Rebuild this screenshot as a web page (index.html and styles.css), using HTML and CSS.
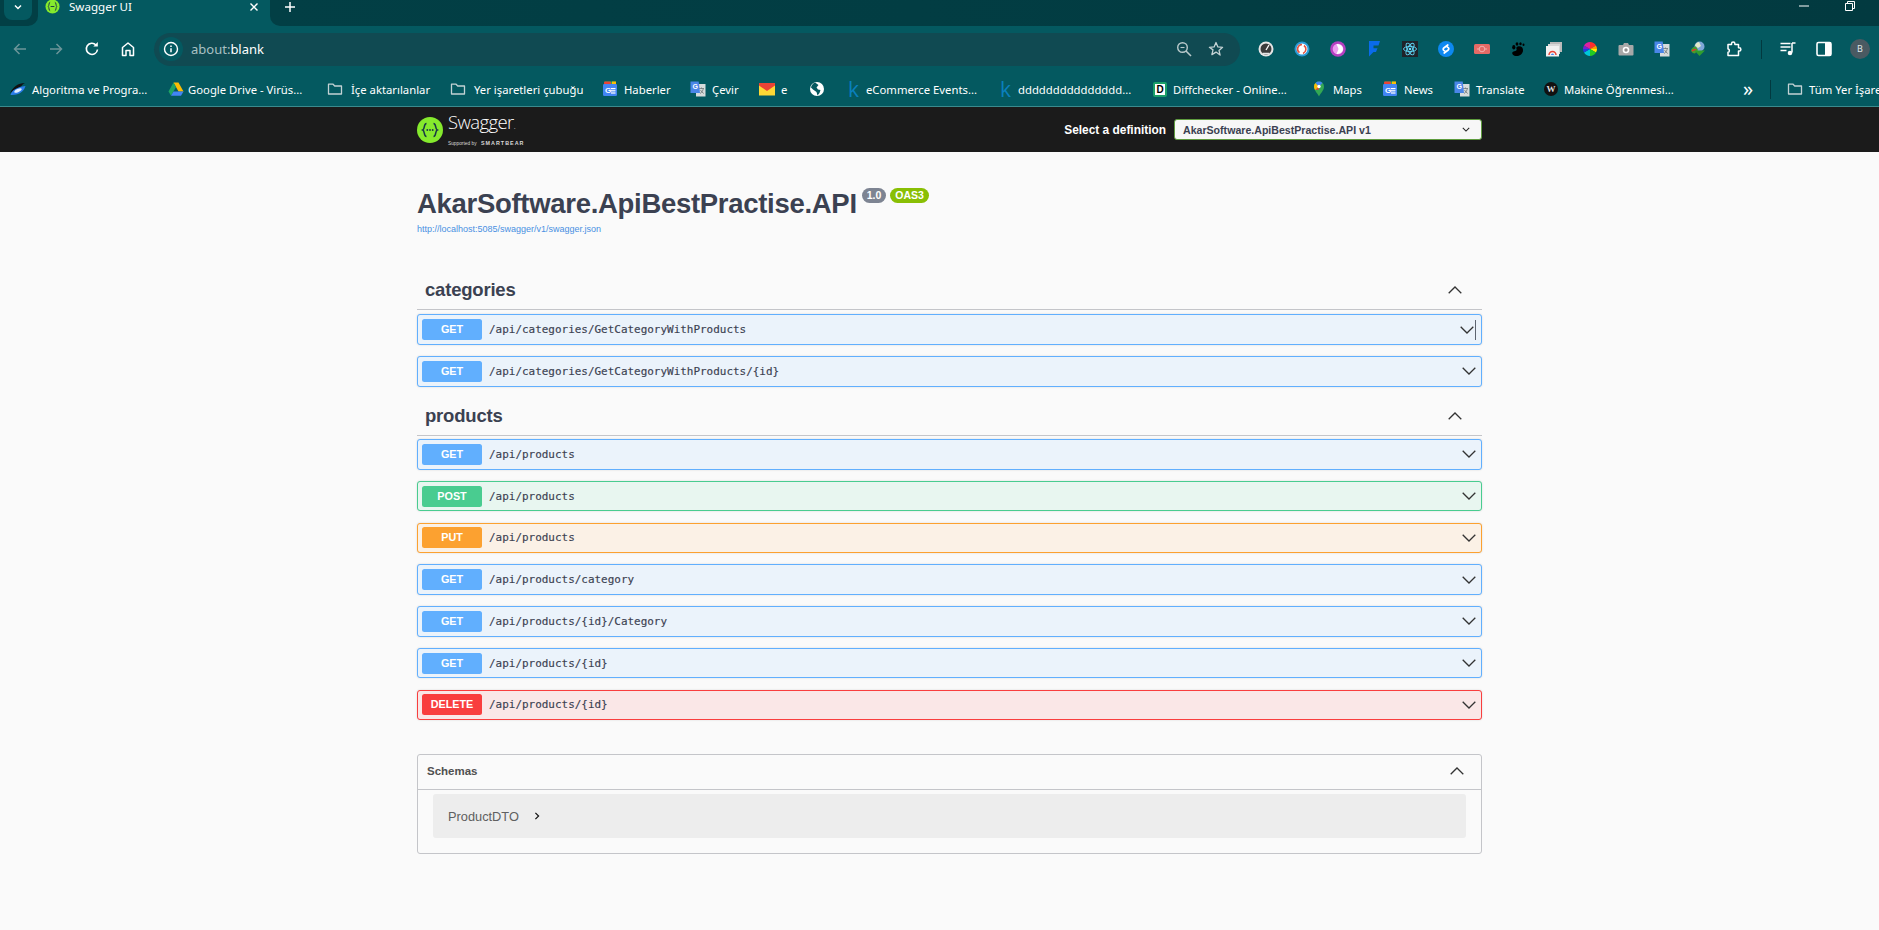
FILE: index.html
```html
<!DOCTYPE html>
<html lang="tr">
<head>
<meta charset="utf-8">
<title>Swagger UI</title>
<link rel="stylesheet" href="styles.css">
</head>
<body>
<svg class="defs" width="0" height="0" aria-hidden="true">
  <defs>
    <symbol id="folder" viewBox="0 0 16 16"><path d="M1.500 13V3.200h4.600l1.600 1.800h6.800V13z" fill="none" stroke="#c3d2d4" stroke-width="1.300" stroke-linejoin="round"/></symbol>
    <symbol id="news" viewBox="0 0 16 16"><rect x="2" y="0.500" width="12" height="4" rx="1" fill="#34a853"/><rect x="2" y="0.500" width="7" height="3" rx="1" fill="#ea4335"/><rect x="10" y="0.500" width="4" height="3" fill="#fbbc04"/><rect x="1" y="3" width="14" height="12" rx="1.200" fill="#4285f4"/><text x="3" y="12" class="newsg">G</text><rect x="9" y="7" width="4.500" height="1.200" fill="#fff"/><rect x="9" y="9.200" width="4.500" height="1.200" fill="#fff"/><rect x="9" y="11.400" width="4.500" height="1.200" fill="#fff"/></symbol>
    <symbol id="translate" viewBox="0 0 16 16"><rect x="6" y="3" width="9.500" height="12.500" fill="#d7dcdc"/><path d="M9 7.500h5M11.500 6.500v1M10 12.500c2-1 3-3 3.300-5M10.500 9c.8 1.500 1.800 2.700 3.300 3.500" stroke="#6e7777" stroke-width=".8" fill="none"/><path d="M.5 .5h8.200l1.300 11.500H.5z" fill="#4a86e8"/><text x="2.400" y="8" class="transg">G</text></symbol>
    <symbol id="chev-down" viewBox="0 0 14 8"><path d="M.7.8 7 7 13.300.8" fill="none" stroke="#333" stroke-width="1.300"/></symbol>
    <symbol id="chev-up" viewBox="0 0 14 8"><path d="M.7 7.200 7 1l6.300 6.200" fill="none" stroke="#333" stroke-width="1.300"/></symbol>
  </defs>
</svg>

<div class="chrome">
  <div class="tabstrip">
    <div class="strip-left">
      <div class="tabs-btn"><svg class="i10" viewBox="0 0 10 10"><path d="M2 3.500 5 6.500 8 3.500" fill="none" stroke="#fff" stroke-width="1.500"/></svg></div>
    </div>
    <div class="tab">
      <svg class="tab-fav" viewBox="0 0 16 16"><circle cx="8" cy="8" r="7.500" fill="#85ea2d"/><path d="M5.500 3.500C4 3.500 4.500 7 3.500 8c1 1 .5 4.500 2 4.500M10.500 3.500c1.500 0 1 3.500 2 4.500-1 1-.5 4.500-2 4.500M6 8h4" fill="none" stroke="#173647" stroke-width="1"/></svg>
      <span class="tab-title">Swagger UI</span>
      <svg class="tab-close" viewBox="0 0 10 10"><path d="M1.500 1.500l7 7M8.500 1.500l-7 7" stroke="#fff" stroke-width="1.400"/></svg>
    </div>
    <div class="strip-right">
      <svg class="new-tab" viewBox="0 0 12 12"><path d="M6 1v10M1 6h10" stroke="#fff" stroke-width="1.500"/></svg>
      <div class="win-controls">
        <svg class="win-btn" viewBox="0 0 10 10"><path d="M0 5h10" stroke="#fff" stroke-width="1"/></svg>
        <svg class="win-btn" viewBox="0 0 10 10"><path d="M.5 2.500h7v7h-7zM2.500 2.500V.5h7v7h-2" fill="none" stroke="#fff" stroke-width="1"/></svg>
      </div>
    </div>
  </div>

  <div class="toolbar">
    <div class="nav">
      <div class="slot"><svg class="i16" viewBox="0 0 16 16"><path d="M14 8H2.500M7.500 3l-5 5 5 5" fill="none" stroke="#6c9599" stroke-width="1.500"/></svg></div>
      <div class="slot"><svg class="i16" viewBox="0 0 16 16"><path d="M2 8h11.500M8.500 3l5 5-5 5" fill="none" stroke="#6c9599" stroke-width="1.500"/></svg></div>
      <div class="slot"><svg class="i16" viewBox="0 0 16 16"><path d="M13.500 8.500A5.600 5.600 0 1 1 12 4" fill="none" stroke="#fff" stroke-width="1.600"/><path d="M13.800 1v4.500H9.300z" fill="#fff"/></svg></div>
      <div class="slot"><svg class="i16" viewBox="0 0 16 16"><path d="M2.500 14.500V6.500L8 2l5.500 4.500v8H10V9.500H6v5z" fill="none" stroke="#fff" stroke-width="1.500" stroke-linejoin="round"/></svg></div>
    </div>
    <div class="omnibox">
      <div class="info-chip"><svg class="i16" viewBox="0 0 16 16"><circle cx="8" cy="8" r="6.500" fill="none" stroke="#fff" stroke-width="1.400"/><path d="M8 7.200v4M8 4.600v1.400" stroke="#fff" stroke-width="1.500"/></svg></div>
      <div class="url"><span class="url-dim">about:</span>blank</div>
      <div class="omni-actions">
        <svg class="i16" viewBox="0 0 16 16"><circle cx="6.500" cy="6.500" r="4.800" fill="none" stroke="#b9c9cb" stroke-width="1.400"/><path d="M10 10l5 5" stroke="#b9c9cb" stroke-width="1.600"/><path d="M4.500 6.500h4" stroke="#b9c9cb" stroke-width="1.100"/></svg>
        <svg class="i16" viewBox="0 0 16 16"><path d="M8 1.500l1.900 4.400 4.700.4-3.600 3.100 1.100 4.700L8 11.100l-4.100 2.500L5 8.900 1.400 6.300l4.700-.4z" fill="none" stroke="#c4d3d5" stroke-width="1.300" stroke-linejoin="round"/></svg>
      </div>
    </div>
    <div class="extensions">
      <div class="slot"><svg class="i16" viewBox="0 0 16 16"><circle cx="8" cy="8" r="7.500" fill="#e6e6e6"/><circle cx="8" cy="8" r="5.500" fill="#3b3b3b"/><path d="M8 9l3-5" stroke="#fff" stroke-width="1.300"/><path d="M4.500 12.500h7" stroke="#e6e6e6" stroke-width="1.500"/></svg></div>
      <div class="slot"><svg class="i16" viewBox="0 0 16 16"><circle cx="8" cy="8" r="7.500" fill="#2a9ad6"/><circle cx="8" cy="8" r="5.500" fill="#fff"/><path d="M8 3.500A4.500 4.500 0 0 0 5.500 11.700" fill="none" stroke="#e2533f" stroke-width="1.600"/><path d="M10 4.500A4.500 4.500 0 0 1 9 12.400" fill="none" stroke="#e2533f" stroke-width="1.600"/></svg></div>
      <div class="slot"><svg class="i16" viewBox="0 0 16 16"><circle cx="8" cy="8" r="7.800" fill="#b540c0"/><circle cx="8" cy="8" r="5.300" fill="#ee9bf0"/><path d="M6.500 3c4 0 6.500 2.200 6.500 5s-2.500 5-6.500 5l2-5z" fill="#fff"/></svg></div>
      <div class="slot"><svg class="i16" viewBox="0 0 16 16"><path d="M3 0h11l-1.500 4.500H7.500v2.800h4l-1.500 3.700H7.500L3 15.500z" fill="#0a6bea"/></svg></div>
      <div class="slot"><svg class="i16" viewBox="0 0 16 16"><rect width="16" height="16" fill="#20232a"/><g fill="none" stroke="#61dafb" stroke-width=".9"><ellipse cx="8" cy="8" rx="6.500" ry="2.600"/><ellipse cx="8" cy="8" rx="6.500" ry="2.600" transform="rotate(60 8 8)"/><ellipse cx="8" cy="8" rx="6.500" ry="2.600" transform="rotate(120 8 8)"/></g><circle cx="8" cy="8" r="1.300" fill="#61dafb"/></svg></div>
      <div class="slot"><svg class="i16" viewBox="0 0 16 16"><circle cx="8" cy="8" r="8" fill="#0d88f0"/><path d="M9.800 4 5.800 7a1.500 1.500 0 0 0 0 2.400l1.700 1.200M6.200 12l4-3a1.500 1.500 0 0 0 0-2.400L8.500 5.400" fill="none" stroke="#fff" stroke-width="1.700" stroke-linecap="round"/></svg></div>
      <div class="slot"><svg class="i16" viewBox="0 0 16 16"><rect y="3" width="16" height="10" rx="1.500" fill="#e66a66"/><circle cx="8" cy="8" r="2.800" fill="none" stroke="#f3b7b5" stroke-width=".9"/><path d="M3 8h2M11 8h2" stroke="#f3b7b5" stroke-width=".9"/></svg></div>
      <div class="slot"><svg class="i16" viewBox="0 0 16 16"><path d="M7.500 5.500c3.500-1 6 1 5.500 4.500-.6 3.500-4 5.500-7.500 5-3-.5-4.200-3-2.500-4.200 1.500-1 3.500-.5 3.700-2C6.300 7.300 6 6 7.500 5.500z" fill="#000"/><ellipse cx="3.800" cy="6.200" rx="1.600" ry="2.200" fill="#000"/><ellipse cx="7" cy="3" rx="1.400" ry="1.800" fill="#000"/><ellipse cx="10.500" cy="2.800" rx="1.200" ry="1.500" fill="#000"/><ellipse cx="13.500" cy="3.800" rx="1" ry="1.300" fill="#000"/></svg></div>
      <div class="slot"><svg class="i16" viewBox="0 0 16 16"><rect x="4" y="1" width="12" height="10" fill="#bbb"/><rect x="2" y="3" width="12" height="10" fill="#d8d8d8"/><rect y="5" width="13" height="10.500" fill="#f1f1f1"/><path d="M3 14a3.500 3.500 0 0 1 7 0" fill="none" stroke="#ea4335" stroke-width="1.500"/><path d="M5 14a1.500 1.500 0 0 1 3 0" fill="#4285f4"/></svg></div>
      <div class="slot"><svg class="i16" viewBox="0 0 16 16"><path d="M8 8V1A7 7 0 0 1 14 4.500z" fill="#ff2d2d"/><path d="M8 8 14 4.500A7 7 0 0 1 15 8z" fill="#ff9a00"/><path d="M8 8h7a7 7 0 0 1-1 3.500z" fill="#ffee00"/><path d="M8 8l6 3.500A7 7 0 0 1 8 15z" fill="#22cc22"/><path d="M8 8v7a7 7 0 0 1-6-3.500z" fill="#00c8d8"/><path d="M8 8 2 11.500A7 7 0 0 1 1 8z" fill="#2040e0"/><path d="M8 8H1a7 7 0 0 1 1-3.500z" fill="#7a20d0"/><path d="M8 8 2 4.500A7 7 0 0 1 8 1z" fill="#e020a0"/></svg></div>
      <div class="slot"><svg class="i16" viewBox="0 0 16 16"><path d="M1.500 4H5l1-2h4l1 2h3.500A1 1 0 0 1 15.500 5v8.500a1 1 0 0 1-1 1h-13a1 1 0 0 1-1-1V5a1 1 0 0 1 1-1z" fill="#a8a8a8"/><circle cx="8" cy="9" r="3.300" fill="#fff"/><circle cx="8" cy="9" r="1.700" fill="#8e8e8e"/></svg></div>
      <div class="slot"><svg class="i16"><use href="#translate"/></svg></div>
      <div class="slot"><svg class="i16" viewBox="0 0 16 16"><circle cx="9.500" cy="5.500" r="5" fill="#7ea7d8"/><path d="M5 5a5 5 0 0 1 4-4l2 4-3 2z" fill="#e2e9c9"/><path d="M1 9c1.500-3 4-4 5-3.500L8 9l-3 3.500C3 12.500 1 11 1 9z" fill="#4c9a2a"/><path d="M2 10c2-1.500 3-1.500 4-1" stroke="#e2382b" stroke-width="1.500" fill="none"/><path d="M4.500 9.500H15L9.500 15z" fill="#2f9e2f"/></svg></div>
      <div class="slot"><svg class="i16" viewBox="0 0 16 16"><path d="M2 3.500h3.500V2.800a1.700 1.700 0 0 1 3.400 0v.7H12.500v3.200h.7a1.700 1.700 0 0 1 0 3.400h-.7v4.400H2v-3.200c1.800 0 1.800-3.300 0-3.300z" fill="none" stroke="#fff" stroke-width="1.500" stroke-linejoin="round"/></svg></div>
      <div class="sep-slot"><span class="toolbar-sep"></span></div>
      <div class="slot"><svg class="i16" viewBox="0 0 16 16"><path d="M.5 2.500h10M.5 6h10M.5 9.500h6" stroke="#fff" stroke-width="1.500"/><path d="M12 2v9.500" stroke="#fff" stroke-width="1.500"/><path d="M12 2h3.500" stroke="#fff" stroke-width="1.500"/><circle cx="10" cy="12" r="2.300" fill="#fff"/></svg></div>
      <div class="slot"><svg class="i16" viewBox="0 0 16 16"><rect x="1" y="1.500" width="14" height="13" rx="1.500" fill="none" stroke="#fff" stroke-width="1.600"/><rect x="9" y="1.500" width="6" height="13" fill="#fff"/></svg></div>
      <div class="slot"><span class="avatar">B</span></div>
    </div>
  </div>

  <div class="bookmarks">
    <div class="bm"><svg class="i16" viewBox="0 0 16 16"><path d="M0 12C3 6 8 2 15 2c-2 1-3 2-3.500 3L3 10z" fill="#111"/><path d="M.5 14C2 9 6 6.500 15.500 5c-1.500 5-6 9.500-15 9z" fill="#2b7de9"/><ellipse cx="8" cy="9.500" rx="4" ry="1.600" fill="#dfeeff" transform="rotate(-25 8 9.500)"/></svg><span>Algoritma ve Progra...</span></div>
    <div class="bm tight"><svg class="i16" viewBox="0 0 16 16"><path d="M5.500 1.500h5L15.500 10.500h-5z" fill="#fbbc04"/><path d="M5.500 1.500 .5 10.500l2.500 4.300L8 6z" fill="#1fa463"/><path d="M3 14.800h10l2.500-4.300H5.500z" fill="#4285f4"/></svg><span>Google Drive - Virüs...</span></div>
    <div class="bm loose"><svg class="i16"><use href="#folder"/></svg><span>İçe aktarılanlar</span></div>
    <div class="bm loose"><svg class="i16"><use href="#folder"/></svg><span>Yer işaretleri çubuğu</span></div>
    <div class="bm"><svg class="i16"><use href="#news"/></svg><span>Haberler</span></div>
    <div class="bm"><svg class="i16"><use href="#translate"/></svg><span>Çevir</span></div>
    <div class="bm"><svg class="i16" viewBox="0 0 16 16"><rect y="2" width="16" height="12.500" fill="#fdd835"/><path d="M0 2h16v2.500L8 10 0 4.500z" fill="#ea4335"/></svg><span>e</span></div>
    <div class="bm"><svg class="i16" viewBox="0 0 16 16"><circle cx="8" cy="8" r="7" fill="#fff"/><path d="M6 1.500 9.500 4 7.500 6.500 9 8.500l2.500.5L10.500 12 8.500 14.500 7.500 11 4 8.500 2 6.500C2.500 4 4 2.500 6 1.500z" fill="#045960"/></svg></div>
    <div class="bm"><span class="k-mark">k</span><span>eCommerce Events...</span></div>
    <div class="bm"><span class="k-mark">k</span><span>ddddddddddddddd...</span></div>
    <div class="bm"><span class="d-mark">D</span><span>Diffchecker - Online...</span></div>
    <div class="bm"><svg class="i16" viewBox="0 0 16 16"><path d="M8 15.500C6 11.500 3 9.500 3 5.500a5 5 0 0 1 10 0c0 4-3 6-5 10z" fill="#34a853"/><path d="M3 5.500a5 5 0 0 1 1.500-3.500L8 5.500 4.300 9C3.500 7.800 3 6.800 3 5.500z" fill="#fbbc04"/><path d="M4.500 2A5 5 0 0 1 11.500 2L8 5.500z" fill="#4285f4"/><path d="M4.300 9 8 5.500l0 3z" fill="#ea4335"/><circle cx="8" cy="5.500" r="1.700" fill="#fff"/></svg><span>Maps</span></div>
    <div class="bm"><svg class="i16"><use href="#news"/></svg><span>News</span></div>
    <div class="bm"><svg class="i16"><use href="#translate"/></svg><span>Translate</span></div>
    <div class="bm"><span class="wp-mark">W</span><span>Makine Öğrenmesi...</span></div>
    <div class="bm-more">»</div>
    <div class="bm-sep"><span class="toolbar-sep"></span></div>
    <div class="bm"><svg class="i16"><use href="#folder"/></svg><span>Tüm Yer İşaretleri</span></div>
  </div>
</div>

<header class="topbar">
  <div class="topbar-inner">
    <div class="logo">
      <svg class="logo-mark" viewBox="0 0 26 26"><circle cx="13" cy="13" r="13" fill="#85ea2d"/><path d="M9.500 6.500C6.500 6.500 8 12 5.800 13c2.200 1 .7 6.500 3.700 6.500M16.500 6.500c3 0 1.500 5.500 3.700 6.500-2.200 1-.7 6.500-3.700 6.500" fill="none" stroke="#173647" stroke-width="1.500"/><circle cx="10.300" cy="13" r=".9" fill="#173647"/><circle cx="13" cy="13" r=".9" fill="#173647"/><circle cx="15.700" cy="13" r=".9" fill="#173647"/></svg>
      <div class="logo-text">
        <div class="logo-name">Swagger<span class="logo-tm">.</span></div>
        <div class="logo-sub"><span class="logo-by">Supported by</span> <span class="logo-bear">SMARTBEAR</span></div>
      </div>
    </div>
    <div class="def-select">
      <span class="def-label">Select a definition</span>
      <div class="def-box"><span>AkarSoftware.ApiBestPractise.API v1</span><svg class="def-chev" viewBox="0 0 10 6"><path d="M1 1l4 4 4-4" fill="none" stroke="#222" stroke-width="1.300"/></svg></div>
    </div>
  </div>
</header>

<main class="content">
  <section class="info">
    <h1 class="title"><span class="title-text">AkarSoftware.ApiBestPractise.API</span><span class="badge badge-ver">1.0</span><span class="badge badge-oas">OAS3</span></h1>
    <a class="spec-link" href="#">http://localhost:5085/swagger/v1/swagger.json</a>
  </section>

  <section class="tag-section first">
    <div class="tag"><h2>categories</h2><svg class="chev"><use href="#chev-up"/></svg></div>
    <div class="ops">
      <div class="op get"><span class="method">GET</span><span class="path">/api/categories/GetCategoryWithProducts</span><svg class="chev shifted"><use href="#chev-down"/></svg><span class="cursor"></span></div>
      <div class="op get"><span class="method">GET</span><span class="path">/api/categories/GetCategoryWithProducts/{id}</span><svg class="chev"><use href="#chev-down"/></svg></div>
    </div>
  </section>

  <section class="tag-section">
    <div class="tag"><h2>products</h2><svg class="chev"><use href="#chev-up"/></svg></div>
    <div class="ops">
      <div class="op get"><span class="method">GET</span><span class="path">/api/products</span><svg class="chev"><use href="#chev-down"/></svg></div>
      <div class="op post"><span class="method">POST</span><span class="path">/api/products</span><svg class="chev"><use href="#chev-down"/></svg></div>
      <div class="op put"><span class="method">PUT</span><span class="path">/api/products</span><svg class="chev"><use href="#chev-down"/></svg></div>
      <div class="op get"><span class="method">GET</span><span class="path">/api/products/category</span><svg class="chev"><use href="#chev-down"/></svg></div>
      <div class="op get"><span class="method">GET</span><span class="path">/api/products/{id}/Category</span><svg class="chev"><use href="#chev-down"/></svg></div>
      <div class="op get"><span class="method">GET</span><span class="path">/api/products/{id}</span><svg class="chev"><use href="#chev-down"/></svg></div>
      <div class="op delete"><span class="method">DELETE</span><span class="path">/api/products/{id}</span><svg class="chev"><use href="#chev-down"/></svg></div>
    </div>
  </section>

  <section class="schemas">
    <div class="schemas-head"><h3>Schemas</h3><svg class="chev"><use href="#chev-up"/></svg></div>
    <div class="model"><span>ProductDTO</span><svg class="model-chev" viewBox="0 0 6 10"><path d="M1 1l4 4-4 4" fill="none" stroke="#111" stroke-width="1.500"/></svg></div>
  </section>
</main>
</body>
</html>
```

FILE: styles.css
```css
* { box-sizing: border-box; }
html, body { margin: 0; height: 100%; }
body {
  background: #fafafa;
  font-family: "Liberation Sans", Arial, sans-serif;
  overflow: hidden;
}
.defs { position: absolute; }
svg { display: block; flex: none; }
.i16 { width: 16px; height: 16px; }
.i10 { width: 10px; height: 10px; }
.newsg { font: bold 8px "Liberation Sans", sans-serif; fill: #fff; }
.transg { font: bold 7px "Liberation Sans", sans-serif; fill: #fff; }

/* browser chrome */
.chrome { background: #045960; color: #fff; font-family: "Noto Sans", sans-serif; }
.tabstrip { display: flex; height: 26px; }
.strip-left {
  width: 38px;
  background: #023f45;
  border-bottom-right-radius: 10px;
  padding-left: 4px;
}
.tabs-btn {
  width: 28px;
  height: 20px;
  background: #045960;
  border-radius: 0 0 8px 8px;
  display: flex;
  align-items: center;
  justify-content: center;
  padding-bottom: 6px;
}
.tab {
  width: 232px;
  display: flex;
  align-items: flex-start;
  padding: 0 11px 0 7px;
}
.tab-fav { width: 15px; height: 15px; margin-top: -1px; }
.tab-title { flex: 1; font-size: 11.600px; line-height: 14px; margin-left: 9px; }
.tab-close { width: 10px; height: 10px; margin-top: 2px; }
.strip-right {
  flex: 1;
  display: flex;
  align-items: flex-start;
  background: linear-gradient(90deg, #023f45, #023a40);
  border-bottom-left-radius: 10px;
  padding-left: 14px;
}
.new-tab { width: 12px; height: 12px; margin-top: 1px; }
.win-controls { margin-left: auto; display: flex; gap: 36px; padding-right: 24px; }
.win-btn { width: 10px; height: 10px; margin-top: 1px; }

.toolbar { display: flex; align-items: center; height: 46px; padding: 0 1px 0 2px; }
.nav, .extensions { display: flex; align-items: center; }
.slot { width: 36px; height: 33px; display: flex; align-items: center; justify-content: center; }
.omnibox {
  flex: 1;
  height: 33px;
  margin: 0 8px;
  background: #104a52;
  border-radius: 17px;
  display: flex;
  align-items: center;
  padding: 0 16px 0 5px;
}
.info-chip {
  width: 24px;
  height: 24px;
  border-radius: 50%;
  background: #045960;
  display: flex;
  align-items: center;
  justify-content: center;
}
.url { flex: 1; margin-left: 8px; font-size: 13px; }
.url-dim { color: #a9c0c3; }
.omni-actions { display: flex; gap: 16px; }
.sep-slot { width: 18px; display: flex; justify-content: center; }
.toolbar-sep { display: block; width: 1px; height: 19px; background: #02393f; }
.avatar {
  width: 20px;
  height: 20px;
  border-radius: 50%;
  background: #4a5a62;
  color: #dfe6e8;
  font-size: 9px;
  line-height: 20px;
  text-align: center;
}

.bookmarks {
  display: grid;
  grid-template-columns: 158px 159px 123px 152px 88px 69px 50px 38px 152px 154px 158px 71px 72px 90px 199px 27px 17px 100px;
  height: 35px;
  padding-left: 10px;
  border-bottom: 1px solid #3a8a8d;
  align-items: center;
  font-size: 11.300px;
  white-space: nowrap;
  overflow: hidden;
}
.bm { display: flex; align-items: center; gap: 6px; }
.tight { gap: 4px; }
.loose { gap: 8px; }
.bm-more { font-size: 20px; line-height: 18px; }
.k-mark { width: 13px; text-align: center; color: #0a80bd; font: 21px/16px "Open Sans", sans-serif; }
.d-mark {
  width: 14px;
  height: 15px;
  background: #fff;
  border: 2px solid #1a9e68;
  border-radius: 2px;
  color: #000;
  font: bold 10px/11px "Liberation Sans", sans-serif;
  text-align: center;
}
.wp-mark {
  width: 14px;
  height: 14px;
  border-radius: 50%;
  background: #111;
  color: #ddd;
  font: bold 9px/14px "Liberation Serif", serif;
  text-align: center;
}

/* swagger topbar */
.topbar { background: #1b1b1b; height: 45px; padding-left: 417px; }
.topbar-inner { width: 1065px; height: 100%; display: flex; align-items: center; justify-content: space-between; }
.logo { display: flex; align-items: center; gap: 5px; }
.logo-mark { width: 26px; height: 26px; }
.logo-text { color: #fff; }
.logo-name { font: 300 18.500px/21px "Open Sans", sans-serif; letter-spacing: -.6px; }
.logo-tm { font-size: 8px; }
.logo-sub { line-height: 8px; color: #d8d8d8; white-space: nowrap; }
.logo-by { font-size: 4.800px; }
.logo-bear { font-weight: bold; font-size: 5.400px; letter-spacing: 1px; }
.def-select { display: flex; align-items: center; gap: 8px; }
.def-label { color: #fff; font-weight: bold; font-size: 11.900px; }
.def-box {
  width: 308px;
  height: 21px;
  background: #f7f7f7;
  border: 1.500px solid #5e9b3e;
  border-radius: 3px;
  display: flex;
  align-items: center;
  justify-content: space-between;
  padding: 0 11px 0 8px;
  font-size: 10.600px;
  font-weight: bold;
  color: #3b4151;
}
.def-chev { width: 8px; height: 5px; }

/* content */
.content { width: 1065px; margin-left: 417px; color: #3b4151; }
.info { padding-top: 34px; height: 119.750px; }
.title {
  margin: 0;
  display: flex;
  align-items: flex-start;
  font-size: 27.500px;
  line-height: 36px;
  font-weight: bold;
}
.title-text { letter-spacing: -.3px; }
.badge {
  margin-top: 2px;
  height: 15px;
  padding: 0 5px;
  border-radius: 8px;
  color: #fff;
  font-size: 10.500px;
  line-height: 15px;
}
.badge-ver { background: #7d8492; margin-left: 5px; }
.badge-oas { background: #89bf04; margin-left: 4px; }
.spec-link { display: block; margin-top: 2px; font-size: 9px; line-height: 11px; color: #4990e2; text-decoration: none; }

.tag {
  height: 38.250px;
  display: flex;
  align-items: center;
  justify-content: space-between;
  padding: 0 20px 0 8px;
  border-bottom: 1px solid #c4c5c9;
}
.tag h2 { margin: 0; font-size: 18.500px; letter-spacing: -.2px; font-weight: bold; }
.ops { padding-top: 3px; }
.first .ops { padding-top: 4.250px; }
.op {
  display: flex;
  align-items: center;
  height: 30.500px;
  margin-bottom: 11.250px;
  padding: 0 5px 0 4px;
  border: 1px solid;
  border-radius: 3px;
  box-shadow: 0 0 2px rgba(0, 0, 0, .15);
}
.method {
  width: 60px;
  height: 21px;
  flex: none;
  border-radius: 2.500px;
  color: #fff;
  font-size: 10.800px;
  font-weight: bold;
  line-height: 21px;
  text-align: center;
}
.path {
  flex: 1;
  margin-left: 7px;
  font: 10.960px "DejaVu Sans Mono", monospace;
  -webkit-text-stroke: .15px #3b4151;
  color: #3b4151;
}
.chev { width: 14px; height: 8px; }
.shifted { margin-right: 1px; }
.cursor { width: 1px; height: 20px; background: #5d6470; }
.get { background: #ebf3fb; border-color: #61affe; }
.get .method { background: #61affe; }
.post { background: #e8f6f0; border-color: #49cc90; }
.post .method { background: #49cc90; }
.put { background: #fbf1e6; border-color: #fca130; }
.put .method { background: #fca130; }
.delete { background: #fae7e7; border-color: #f93e3e; }
.delete .method { background: #f93e3e; }

.schemas {
  margin-top: 34px;
  height: 99.500px;
  border: 1px solid #c4c5c9;
  border-radius: 3px;
}
.schemas-head {
  height: 35px;
  display: flex;
  align-items: center;
  justify-content: space-between;
  padding: 0 17px 3px 9px;
  border-bottom: 1px solid #c4c5c9;
}
.schemas-head h3 { margin: 0; font-size: 11.500px; font-weight: bold; color: #505050; }
.model {
  margin: 4px 15px 0;
  height: 44px;
  background: #ededed;
  border-radius: 3px;
  display: flex;
  align-items: center;
  gap: 15px;
  padding-left: 15px;
  font-size: 12.800px;
  color: #606060;
}
.model-chev { width: 6px; height: 8px; }
```
